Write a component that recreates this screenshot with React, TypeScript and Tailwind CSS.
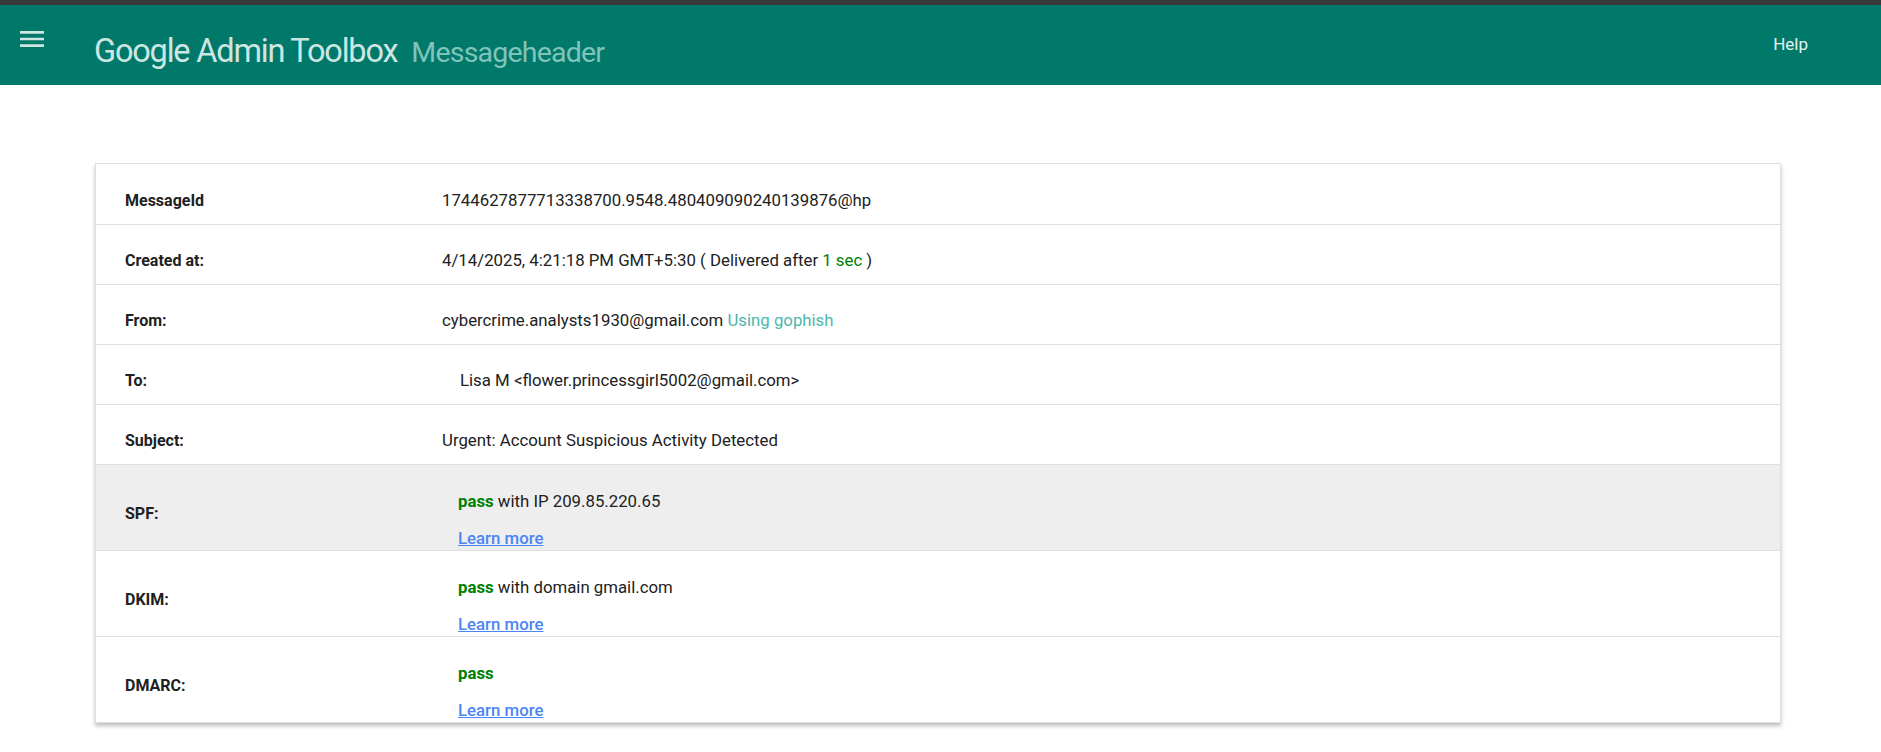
import React from 'react'

type Row = {
  label: string
  value: React.ReactNode
  auth?: boolean
  shaded?: boolean
}

const PASS = <span className="font-bold text-[#008000]">pass</span>

function LearnMore() {
  return (
    <a href="#" className="font-medium text-[#4c85f5] underline">
      Learn more
    </a>
  )
}

const ROWS: Row[] = [
  { label: 'MessageId', value: '1744627877713338700.9548.480409090240139876@hp' },
  {
    label: 'Created at:',
    value: (
      <>
        4/14/2025, 4:21:18 PM GMT+5:30 ( Delivered after <span className="text-[#008000]">1 sec</span> )
      </>
    ),
  },
  {
    label: 'From:',
    value: (
      <>
        cybercrime.analysts1930@gmail.com <span className="text-[#4db6ac]">Using gophish</span>
      </>
    ),
  },
  {
    label: 'To:',
    value: <span className="pl-[18px]">Lisa M &lt;flower.princessgirl5002@gmail.com&gt;</span>,
  },
  { label: 'Subject:', value: 'Urgent: Account Suspicious Activity Detected' },
  { label: 'SPF:', value: <>{PASS} with IP 209.85.220.65</>, auth: true, shaded: true },
  { label: 'DKIM:', value: <>{PASS} with domain gmail.com</>, auth: true },
  { label: 'DMARC:', value: PASS, auth: true },
]

function MenuIcon() {
  return (
    <svg width="32" height="32" viewBox="0 0 24 24" fill="#cde6e2">
      <path d="M3 18h18v-2H3v2zm0-5h18v-2H3v2zm0-7v2h18V6H3z" />
    </svg>
  )
}

export default function App() {
  return (
    <div className="min-h-screen bg-white font-['Roboto',sans-serif] text-[#212121]">
      <div className="h-[5px] bg-[#3a3a3a]" />
      <header className="flex h-[80px] items-center bg-[#00796b] pr-[73px]">
        <button className="mb-[12px] ml-[16px] flex h-[32px] w-[32px] items-center justify-center">
          <MenuIcon />
        </button>
        <div className="ml-[46px] mt-[12px] flex items-baseline gap-[14px]">
          <span className="text-[32.5px] tracking-[-1.2px] text-[#cde6e2]">Google Admin Toolbox</span>
          <span className="text-[28.5px] tracking-[-0.8px] text-[#80c4bb]">Messageheader</span>
        </div>
        <a href="#" className="ml-auto text-[17px] text-[#e0f2f1]">
          Help
        </a>
      </header>

      <main className="pb-[30px] pl-[95px] pr-[100px] pt-[78px]">
        <div className="border border-[#e0e0e0] shadow-[0_3px_4px_rgba(0,0,0,0.25)]">
          {ROWS.map((row, i) => (
            <div
              key={row.label}
              className={`flex items-center pt-[13px] ${i > 0 ? 'border-t border-[#e0e0e0]' : ''} ${
                row.shaded ? 'bg-[#eeeeee]' : 'bg-white'
              } ${row.auth ? 'h-[86px]' : 'h-[60px]'}`}
            >
              <div className="w-[346px] shrink-0 pl-[29px] text-[16px] font-bold text-[#212121]">
                {row.label}
              </div>
              {row.auth ? (
                <div className="mt-[-2px] flex flex-col gap-[11px] pl-[16px] pt-[14px] text-[16.8px]">
                  <div>{row.value}</div>
                  <div>
                    <LearnMore />
                  </div>
                </div>
              ) : (
                <div className="text-[16.8px]">{row.value}</div>
              )}
            </div>
          ))}
        </div>
      </main>
    </div>
  )
}
